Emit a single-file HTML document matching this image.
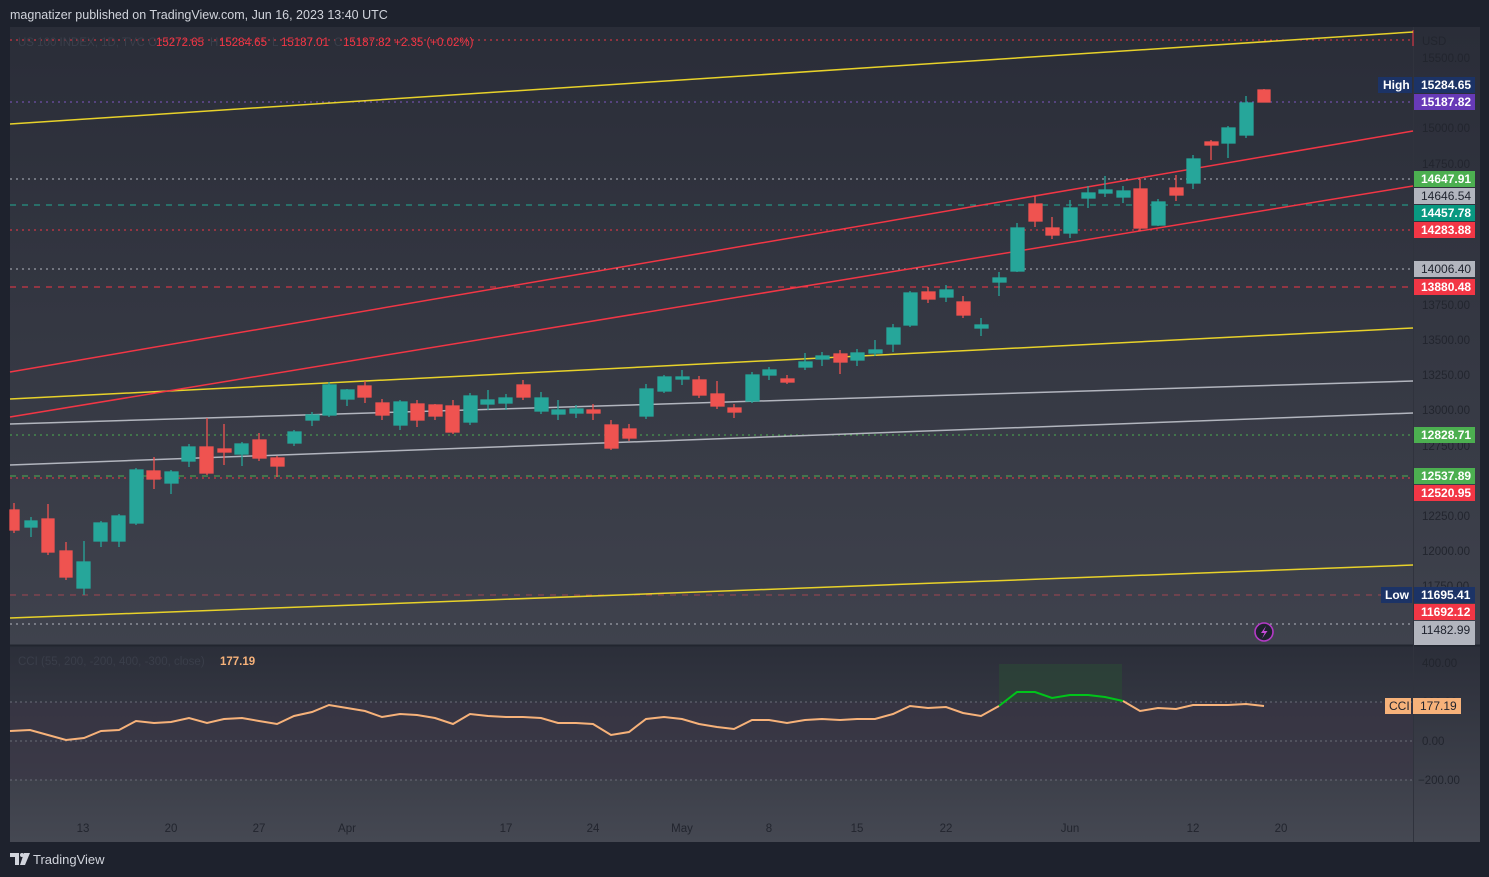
<!DOCTYPE html>
<html><head><meta charset="utf-8"><style>
html,body{margin:0;padding:0;background:#1e222d;width:1489px;height:877px;overflow:hidden;font-family:"Liberation Sans",sans-serif}
svg{position:absolute;left:0;top:0}
</style></head><body>
<svg width="1489" height="877" viewBox="0 0 1489 877" xmlns="http://www.w3.org/2000/svg" font-family="Liberation Sans, sans-serif">
<defs>
<linearGradient id="gm" x1="0" y1="0" x2="0" y2="1"><stop offset="0" stop-color="#2a2d38"/><stop offset="1" stop-color="#3f424d"/></linearGradient>
<linearGradient id="gc" x1="0" y1="0" x2="0" y2="1"><stop offset="0" stop-color="#2b2e39"/><stop offset="1" stop-color="#454852"/></linearGradient>
</defs>
<text x="10" y="19" font-size="12.5" fill="#d1d4dc">magnatizer published on TradingView.com, Jun 16, 2023 13:40 UTC</text>
<rect x="10" y="27" width="1470" height="619" fill="url(#gm)"/>
<rect x="10" y="646" width="1470" height="196" fill="url(#gc)"/>
<rect x="10" y="702" width="1403" height="78" fill="#3b3545" opacity="0.55"/>
<line x1="10" y1="645.5" x2="1480" y2="645.5" stroke="#22252f" stroke-width="2"/>
<line x1="1413.5" y1="27" x2="1413.5" y2="842" stroke="#30333d" stroke-width="1"/>
<g stroke-width="1.1" fill="none">
<line x1="10" y1="40" x2="1413" y2="40" stroke="#f23645" stroke-dasharray="2 4"/>
<line x1="10" y1="102" x2="1413" y2="102" stroke="#7e57c2" stroke-dasharray="2 4"/>
<line x1="10" y1="179" x2="1413" y2="179" stroke="#b2b5be" stroke-dasharray="2 4"/>
<line x1="10" y1="205" x2="1413" y2="205" stroke="#22ab94" stroke-dasharray="6 6"/>
<line x1="10" y1="230" x2="1413" y2="230" stroke="#f23645" stroke-dasharray="2 4"/>
<line x1="10" y1="269" x2="1413" y2="269" stroke="#b2b5be" stroke-dasharray="2 4"/>
<line x1="10" y1="287" x2="1413" y2="287" stroke="#f23645" stroke-dasharray="6 6"/>
<line x1="10" y1="435" x2="1413" y2="435" stroke="#4caf50" stroke-dasharray="2 4"/>
<line x1="10" y1="476" x2="1413" y2="476" stroke="#4caf50" stroke-dasharray="6 6"/>
<line x1="10" y1="478" x2="1413" y2="478" stroke="#f23645" stroke-dasharray="2 4"/>
<line x1="10" y1="595" x2="1413" y2="595" stroke="#a04550" stroke-dasharray="6 6"/>
<line x1="10" y1="624" x2="1413" y2="624" stroke="#b2b5be" stroke-dasharray="2 4"/>
</g>
<line x1="1413" y1="30" x2="1413" y2="46" stroke="#f23645" stroke-width="1"/>
<g stroke-width="1.5">
<line x1="10" y1="124" x2="1413" y2="32" stroke="#e8d22a"/>
<line x1="10" y1="399" x2="1413" y2="328" stroke="#e8d22a"/>
<line x1="10" y1="618" x2="1413" y2="565" stroke="#e8d22a"/>
<line x1="10" y1="372" x2="1413" y2="131" stroke="#f23645"/>
<line x1="10" y1="417" x2="1413" y2="186" stroke="#f23645"/>
<line x1="10" y1="424" x2="1413" y2="381" stroke="#b2b5be"/>
<line x1="10" y1="465" x2="1413" y2="413" stroke="#b2b5be"/>
</g>
<g stroke-width="1.3">
<g stroke="#ef5350" fill="#ef5350"><line x1="14" y1="503" x2="14" y2="533"/><rect x="10" y="510" width="9" height="20"/></g>
<g stroke="#26a69a" fill="#26a69a"><line x1="31" y1="517" x2="31" y2="537"/><rect x="25" y="521" width="12" height="6"/></g>
<g stroke="#ef5350" fill="#ef5350"><line x1="48" y1="504" x2="48" y2="555"/><rect x="42" y="519" width="12" height="33"/></g>
<g stroke="#ef5350" fill="#ef5350"><line x1="66" y1="542" x2="66" y2="580"/><rect x="60" y="551" width="12" height="26"/></g>
<g stroke="#26a69a" fill="#26a69a"><line x1="84" y1="541" x2="84" y2="595"/><rect x="77" y="562" width="13" height="26"/></g>
<g stroke="#26a69a" fill="#26a69a"><line x1="101" y1="521" x2="101" y2="547"/><rect x="94" y="523" width="13" height="18"/></g>
<g stroke="#26a69a" fill="#26a69a"><line x1="119" y1="514" x2="119" y2="547"/><rect x="112" y="516" width="13" height="25"/></g>
<g stroke="#26a69a" fill="#26a69a"><line x1="136" y1="468" x2="136" y2="525"/><rect x="130" y="470" width="13" height="53"/></g>
<g stroke="#ef5350" fill="#ef5350"><line x1="154" y1="457" x2="154" y2="489"/><rect x="147" y="471" width="13" height="8"/></g>
<g stroke="#26a69a" fill="#26a69a"><line x1="171" y1="470" x2="171" y2="494"/><rect x="165" y="472" width="13" height="11"/></g>
<g stroke="#26a69a" fill="#26a69a"><line x1="189" y1="444" x2="189" y2="467"/><rect x="182" y="447" width="13" height="14"/></g>
<g stroke="#ef5350" fill="#ef5350"><line x1="207" y1="418" x2="207" y2="475"/><rect x="200" y="447" width="13" height="26"/></g>
<g stroke="#ef5350" fill="#ef5350"><line x1="224" y1="424" x2="224" y2="465"/><rect x="218" y="449" width="13" height="3"/></g>
<g stroke="#26a69a" fill="#26a69a"><line x1="242" y1="442" x2="242" y2="466"/><rect x="235" y="444" width="13" height="10"/></g>
<g stroke="#ef5350" fill="#ef5350"><line x1="259" y1="433" x2="259" y2="461"/><rect x="253" y="440" width="13" height="18"/></g>
<g stroke="#ef5350" fill="#ef5350"><line x1="277" y1="456" x2="277" y2="477"/><rect x="271" y="458" width="13" height="8"/></g>
<g stroke="#26a69a" fill="#26a69a"><line x1="294" y1="430" x2="294" y2="446"/><rect x="288" y="432" width="13" height="11"/></g>
<g stroke="#26a69a" fill="#26a69a"><line x1="312" y1="412" x2="312" y2="426"/><rect x="306" y="415" width="13" height="5"/></g>
<g stroke="#26a69a" fill="#26a69a"><line x1="329" y1="382" x2="329" y2="417"/><rect x="323" y="385" width="13" height="30"/></g>
<g stroke="#26a69a" fill="#26a69a"><line x1="347" y1="389" x2="347" y2="406"/><rect x="341" y="390" width="13" height="9"/></g>
<g stroke="#ef5350" fill="#ef5350"><line x1="365" y1="381" x2="365" y2="403"/><rect x="358" y="386" width="13" height="11"/></g>
<g stroke="#ef5350" fill="#ef5350"><line x1="382" y1="399" x2="382" y2="420"/><rect x="376" y="403" width="13" height="12"/></g>
<g stroke="#26a69a" fill="#26a69a"><line x1="400" y1="400" x2="400" y2="430"/><rect x="394" y="402" width="13" height="23"/></g>
<g stroke="#ef5350" fill="#ef5350"><line x1="417" y1="400" x2="417" y2="427"/><rect x="411" y="404" width="13" height="16"/></g>
<g stroke="#ef5350" fill="#ef5350"><line x1="435" y1="404" x2="435" y2="420"/><rect x="429" y="405" width="13" height="11"/></g>
<g stroke="#ef5350" fill="#ef5350"><line x1="453" y1="400" x2="453" y2="434"/><rect x="446" y="406" width="13" height="26"/></g>
<g stroke="#26a69a" fill="#26a69a"><line x1="470" y1="393" x2="470" y2="425"/><rect x="464" y="396" width="13" height="26"/></g>
<g stroke="#26a69a" fill="#26a69a"><line x1="488" y1="390" x2="488" y2="410"/><rect x="481" y="400" width="13" height="4"/></g>
<g stroke="#26a69a" fill="#26a69a"><line x1="506" y1="394" x2="506" y2="410"/><rect x="499" y="398" width="13" height="5"/></g>
<g stroke="#ef5350" fill="#ef5350"><line x1="523" y1="380" x2="523" y2="400"/><rect x="517" y="385" width="13" height="12"/></g>
<g stroke="#26a69a" fill="#26a69a"><line x1="541" y1="392" x2="541" y2="414"/><rect x="535" y="398" width="13" height="13"/></g>
<g stroke="#26a69a" fill="#26a69a"><line x1="558" y1="400" x2="558" y2="420"/><rect x="552" y="410" width="13" height="4"/></g>
<g stroke="#26a69a" fill="#26a69a"><line x1="576" y1="405" x2="576" y2="418"/><rect x="570" y="409" width="13" height="4"/></g>
<g stroke="#ef5350" fill="#ef5350"><line x1="593" y1="404" x2="593" y2="420"/><rect x="587" y="410" width="13" height="3"/></g>
<g stroke="#ef5350" fill="#ef5350"><line x1="611" y1="420" x2="611" y2="450"/><rect x="605" y="425" width="13" height="23"/></g>
<g stroke="#ef5350" fill="#ef5350"><line x1="629" y1="424" x2="629" y2="441"/><rect x="623" y="429" width="13" height="9"/></g>
<g stroke="#26a69a" fill="#26a69a"><line x1="646" y1="384" x2="646" y2="419"/><rect x="640" y="389" width="13" height="27"/></g>
<g stroke="#26a69a" fill="#26a69a"><line x1="664" y1="375" x2="664" y2="393"/><rect x="658" y="377" width="13" height="14"/></g>
<g stroke="#26a69a" fill="#26a69a"><line x1="682" y1="370" x2="682" y2="385"/><rect x="676" y="377" width="13" height="2"/></g>
<g stroke="#ef5350" fill="#ef5350"><line x1="699" y1="376" x2="699" y2="398"/><rect x="693" y="380" width="13" height="15"/></g>
<g stroke="#ef5350" fill="#ef5350"><line x1="717" y1="381" x2="717" y2="409"/><rect x="711" y="394" width="13" height="12"/></g>
<g stroke="#ef5350" fill="#ef5350"><line x1="734" y1="404" x2="734" y2="418"/><rect x="728" y="408" width="13" height="4"/></g>
<g stroke="#26a69a" fill="#26a69a"><line x1="752" y1="372" x2="752" y2="403"/><rect x="746" y="375" width="13" height="26"/></g>
<g stroke="#26a69a" fill="#26a69a"><line x1="769" y1="367" x2="769" y2="380"/><rect x="763" y="370" width="13" height="5"/></g>
<g stroke="#ef5350" fill="#ef5350"><line x1="787" y1="375" x2="787" y2="384"/><rect x="781" y="379" width="13" height="3"/></g>
<g stroke="#26a69a" fill="#26a69a"><line x1="805" y1="353" x2="805" y2="370"/><rect x="799" y="362" width="13" height="5"/></g>
<g stroke="#26a69a" fill="#26a69a"><line x1="822" y1="352" x2="822" y2="366"/><rect x="816" y="356" width="13" height="3"/></g>
<g stroke="#ef5350" fill="#ef5350"><line x1="840" y1="350" x2="840" y2="374"/><rect x="834" y="354" width="13" height="8"/></g>
<g stroke="#26a69a" fill="#26a69a"><line x1="857" y1="349" x2="857" y2="366"/><rect x="851" y="353" width="13" height="7"/></g>
<g stroke="#26a69a" fill="#26a69a"><line x1="875" y1="340" x2="875" y2="356"/><rect x="869" y="350" width="13" height="3"/></g>
<g stroke="#26a69a" fill="#26a69a"><line x1="893" y1="324" x2="893" y2="352"/><rect x="887" y="328" width="13" height="16"/></g>
<g stroke="#26a69a" fill="#26a69a"><line x1="910" y1="291" x2="910" y2="327"/><rect x="904" y="293" width="13" height="32"/></g>
<g stroke="#ef5350" fill="#ef5350"><line x1="928" y1="287" x2="928" y2="303"/><rect x="922" y="292" width="13" height="7"/></g>
<g stroke="#26a69a" fill="#26a69a"><line x1="946" y1="285" x2="946" y2="302"/><rect x="940" y="290" width="13" height="7"/></g>
<g stroke="#ef5350" fill="#ef5350"><line x1="963" y1="296" x2="963" y2="318"/><rect x="957" y="302" width="13" height="13"/></g>
<g stroke="#26a69a" fill="#26a69a"><line x1="981" y1="318" x2="981" y2="336"/><rect x="975" y="325" width="13" height="3"/></g>
<g stroke="#26a69a" fill="#26a69a"><line x1="999" y1="272" x2="999" y2="296"/><rect x="993" y="278" width="13" height="4"/></g>
<g stroke="#26a69a" fill="#26a69a"><line x1="1017" y1="223" x2="1017" y2="272"/><rect x="1011" y="228" width="13" height="43"/></g>
<g stroke="#ef5350" fill="#ef5350"><line x1="1035" y1="196" x2="1035" y2="227"/><rect x="1029" y="204" width="13" height="17"/></g>
<g stroke="#ef5350" fill="#ef5350"><line x1="1052" y1="217" x2="1052" y2="239"/><rect x="1046" y="228" width="13" height="7"/></g>
<g stroke="#26a69a" fill="#26a69a"><line x1="1070" y1="200" x2="1070" y2="238"/><rect x="1064" y="208" width="13" height="25"/></g>
<g stroke="#26a69a" fill="#26a69a"><line x1="1088" y1="186" x2="1088" y2="208"/><rect x="1082" y="193" width="13" height="5"/></g>
<g stroke="#26a69a" fill="#26a69a"><line x1="1105" y1="176" x2="1105" y2="197"/><rect x="1099" y="190" width="13" height="3"/></g>
<g stroke="#26a69a" fill="#26a69a"><line x1="1123" y1="186" x2="1123" y2="203"/><rect x="1117" y="191" width="13" height="6"/></g>
<g stroke="#ef5350" fill="#ef5350"><line x1="1140" y1="179" x2="1140" y2="231"/><rect x="1134" y="189" width="13" height="39"/></g>
<g stroke="#26a69a" fill="#26a69a"><line x1="1158" y1="199" x2="1158" y2="226"/><rect x="1152" y="202" width="13" height="23"/></g>
<g stroke="#ef5350" fill="#ef5350"><line x1="1176" y1="175" x2="1176" y2="201"/><rect x="1170" y="188" width="13" height="7"/></g>
<g stroke="#26a69a" fill="#26a69a"><line x1="1193" y1="155" x2="1193" y2="189"/><rect x="1187" y="159" width="13" height="24"/></g>
<g stroke="#ef5350" fill="#ef5350"><line x1="1211" y1="140" x2="1211" y2="160"/><rect x="1205" y="142" width="13" height="3"/></g>
<g stroke="#26a69a" fill="#26a69a"><line x1="1228" y1="126" x2="1228" y2="158"/><rect x="1222" y="128" width="13" height="15"/></g>
<g stroke="#26a69a" fill="#26a69a"><line x1="1246" y1="96" x2="1246" y2="138"/><rect x="1240" y="103" width="13" height="32"/></g>
<g stroke="#ef5350" fill="#ef5350"><line x1="1264" y1="89" x2="1264" y2="102"/><rect x="1258" y="90" width="12" height="12"/></g>
</g>
<g font-size="11.5">
<text x="18" y="46" fill="#3a3e4a">US 100 INDEX, 1D, TVC  O</text>
<text x="156" y="46" fill="#f23645">15272.65</text>
<text x="210" y="46" fill="#3a3e4a">H</text>
<text x="219" y="46" fill="#f23645">15284.65</text>
<text x="272" y="46" fill="#3a3e4a">L</text>
<text x="281" y="46" fill="#f23645">15187.01</text>
<text x="334" y="46" fill="#3a3e4a">C</text>
<text x="343" y="46" fill="#f23645">15187.82  +2.35 (+0.02%)</text>
</g>
<g font-size="11.5" fill="#22252e">
<text x="1422" y="45">USD</text>
<text x="1422" y="62">15500.00</text>
<text x="1422" y="132">15000.00</text>
<text x="1422" y="168">14750.00</text>
<text x="1422" y="309">13750.00</text>
<text x="1422" y="344">13500.00</text>
<text x="1422" y="379">13250.00</text>
<text x="1422" y="414">13000.00</text>
<text x="1422" y="450">12750.00</text>
<text x="1422" y="520">12250.00</text>
<text x="1422" y="555">12000.00</text>
<text x="1422" y="590">11750.00</text>
<text x="1422" y="667">400.00</text>
<text x="1422" y="706">200.00</text>
<text x="1422" y="745">0.00</text>
<text x="1418" y="784">−200.00</text>
</g>
<g font-size="12" font-weight="bold" fill="#fff">
<rect x="1378" y="77" width="34" height="16" fill="#1c3366"/><text x="1383" y="89">High</text>
<rect x="1414" y="77" width="61" height="16" fill="#1c3366"/><text x="1421" y="89">15284.65</text>
<rect x="1414" y="94" width="61" height="16" fill="#673ab7"/><text x="1421" y="106">15187.82</text>
<rect x="1414" y="171" width="61" height="16" fill="#4caf50"/><text x="1421" y="183">14647.91</text>
<rect x="1414" y="188" width="61" height="16" fill="#b2b5be"/><text x="1421" y="200" fill="#1e222d" font-weight="normal">14646.54</text>
<rect x="1414" y="205" width="61" height="16" fill="#089981"/><text x="1421" y="217">14457.78</text>
<rect x="1414" y="222" width="61" height="16" fill="#f23645"/><text x="1421" y="234">14283.88</text>
<rect x="1414" y="261" width="61" height="16" fill="#b2b5be"/><text x="1421" y="273" fill="#1e222d" font-weight="normal">14006.40</text>
<rect x="1414" y="279" width="61" height="16" fill="#f23645"/><text x="1421" y="291">13880.48</text>
<rect x="1414" y="427" width="61" height="16" fill="#4caf50"/><text x="1421" y="439">12828.71</text>
<rect x="1414" y="468" width="61" height="16" fill="#4caf50"/><text x="1421" y="480">12537.89</text>
<rect x="1414" y="485" width="61" height="16" fill="#f23645"/><text x="1421" y="497">12520.95</text>
<rect x="1381" y="587" width="31" height="16" fill="#1c3366"/><text x="1385" y="599">Low</text>
<rect x="1414" y="587" width="61" height="16" fill="#1c3366"/><text x="1421" y="599">11695.41</text>
<rect x="1414" y="604" width="61" height="16" fill="#f23645"/><text x="1421" y="616">11692.12</text>
<rect x="1414" y="621" width="61" height="24" fill="#b2b5be"/><text x="1421" y="634" fill="#1e222d" font-weight="normal">11482.99</text>
</g>
<circle cx="1264" cy="632" r="9" fill="#1e222d" stroke="#b43ac6" stroke-width="1.6"/>
<path d="M1266 626 L1261 633 L1264.5 633 L1262 638.5 L1267.5 631 L1264 631 Z" fill="#c64bd8"/>
<text x="18" y="665" font-size="11.5" fill="#3a3e4a">CCI (55, 200, -200, 400, -300, close)</text>
<text x="220" y="665" font-size="11.5" font-weight="bold" fill="#f7b27a">177.19</text>
<g stroke="#6a6d78" stroke-width="1" stroke-dasharray="2 3">
<line x1="10" y1="702" x2="1413" y2="702"/>
<line x1="10" y1="741" x2="1413" y2="741"/>
<line x1="10" y1="780" x2="1413" y2="780"/>
</g>
<rect x="999" y="664" width="123" height="38" fill="#2b4a35" opacity="0.6"/>
<polyline fill="none" stroke="#f7b27a" stroke-width="2" points="10,731 30,730 48,735 66,740 84,738 101,731 119,730 136,721 154,723 171,722 189,718 207,723 224,719 242,718 259,721 277,724 294,716 312,712 329,705 347,708 365,711 382,717 400,714 417,715 435,718 453,724 470,714 488,716 506,717 523,717 541,718 558,723 576,723 593,724 611,735 629,732 646,719 664,717 682,719 699,724 717,727 734,729 752,720 769,720 787,723 805,720 822,719 840,720 857,719 875,719 893,714 910,706 928,708 946,707 963,713 981,716 999,706"/>
<polyline fill="none" stroke="#00c51a" stroke-width="2" points="999,706 1017,692 1035,692 1052,698 1070,695 1088,695 1105,697 1123,701"/>
<polyline fill="none" stroke="#f7b27a" stroke-width="2" points="1123,701 1140,711 1158,708 1176,709 1193,705 1211,705 1228,705 1246,704 1264,706"/>
<rect x="1385" y="698" width="26" height="16" fill="#f7b27a"/><text x="1389" y="710" font-size="12" fill="#1e222d">CCI</text>
<rect x="1413" y="698" width="48" height="16" fill="#f7b27a"/><text x="1420" y="710" font-size="12" fill="#1e222d">177.19</text>
<g font-size="11.5" fill="#22252e" text-anchor="middle">
<text x="83" y="832">13</text><text x="171" y="832">20</text><text x="259" y="832">27</text><text x="347" y="832">Apr</text>
<text x="506" y="832">17</text><text x="593" y="832">24</text><text x="682" y="832">May</text><text x="769" y="832">8</text>
<text x="857" y="832">15</text><text x="946" y="832">22</text><text x="1070" y="832">Jun</text><text x="1193" y="832">12</text><text x="1281" y="832">20</text>
</g>
<path d="M10 853 H19 V865 H15 V857 H10 Z" fill="#d1d4dc"/>
<circle cx="22" cy="855" r="2" fill="#d1d4dc"/>
<path d="M24 853 H30 L25 865 H20 Z" fill="#d1d4dc"/>
<text x="33" y="864" font-size="13" fill="#d1d4dc">TradingView</text>
</svg>
</body></html>
